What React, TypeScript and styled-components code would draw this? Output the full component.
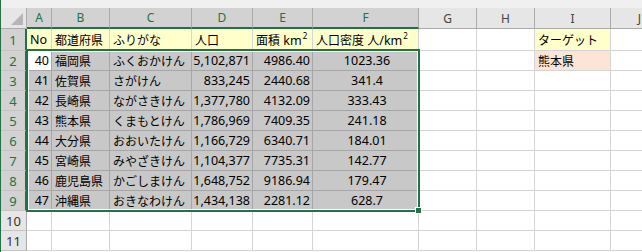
import React from "react";
import styled, { createGlobalStyle, css } from "styled-components";

const GREEN = "#217346";

const Global = createGlobalStyle`
  html, body { margin: 0; padding: 0; background: #fff; }
  body { font-family: "Noto Sans", "Noto Sans CJK JP", sans-serif; color: #000; }
`;

const Window = styled.div`
  width: 642px;
  height: 252px;
  overflow: hidden;
  box-sizing: border-box;
  border-left: 1px solid ${GREEN};
  background: #fff;
`;

const TopStrip = styled.div`
  height: 8px;
  background: #f0f0f0;
`;

const Sheet = styled.div`
  display: grid;
  grid-template-columns: 26px 25px 58px 82px 61px 60px 106px 58px 58px 76px 58px;
  grid-template-rows: 21px 22px repeat(10, 20px);
  font-size: 12.5px;
`;

type Pos = { $r: number; $c: number };

const placed = css<Pos>`
  grid-row: ${(p) => p.$r};
  grid-column: ${(p) => p.$c};
  box-sizing: border-box;
  min-width: 0;
  overflow: hidden;
  white-space: nowrap;
  display: flex;
  align-items: center;
`;

const Corner = styled.div<Pos>`
  ${placed};
  background: #e6e6e6;
  border-right: 1px solid #ababab;
  border-bottom: 1px solid #ababab;
  justify-content: flex-end;
  align-items: flex-end;
  padding: 0 3px 3px 0;
`;

const Triangle = styled.div`
  width: 0;
  height: 0;
  border-left: 12px solid transparent;
  border-bottom: 12px solid #b5b5b5;
`;

const ColHead = styled.div<Pos & { $sel: boolean }>`
  ${placed};
  justify-content: center;
  font-size: 12px;
  background: ${(p) => (p.$sel ? "#d2d2d2" : "#e6e6e6")};
  color: ${(p) => (p.$sel ? GREEN : "#444")};
  border-right: 1px solid #ababab;
  border-bottom: ${(p) => (p.$sel ? `2px solid ${GREEN}` : "1px solid #ababab")};
`;

const RowHead = styled.div<Pos & { $sel: boolean }>`
  ${placed};
  justify-content: center;
  font-size: 13px;
  background: ${(p) => (p.$sel ? "#d2d2d2" : "#e6e6e6")};
  color: ${(p) => (p.$sel ? GREEN : "#333")};
  border-right: ${(p) => (p.$sel ? `2px solid ${GREEN}` : "1px solid #ababab")};
  border-bottom: 1px solid #c4c4c4;
`;

type Fill = "white" | "yellow" | "peach" | "sel";
type Align = "left" | "right" | "center";

const fills: Record<Fill, string> = {
  white: "#ffffff",
  yellow: "#ffffcc",
  peach: "#fce4d6",
  sel: "#c8c8c8",
};

const Cell = styled.div<Pos & { $fill: Fill; $align: Align; $line: "light" | "dark" }>`
  ${placed};
  padding: ${(p) => (p.$align === "right" ? "0 2px 0 0" : "0 0 0 3px")};
  background: ${(p) => fills[p.$fill]};
  border-right: 1px solid ${(p) => (p.$line === "dark" ? "#a6a6a6" : "#d4d4d4")};
  border-bottom: 1px solid ${(p) => (p.$line === "dark" ? "#a6a6a6" : "#d4d4d4")};
  justify-content: ${(p) =>
    p.$align === "left" ? "flex-start" : p.$align === "right" ? "flex-end" : "center"};
`;

const Label = styled.span`
  display: inline-block;
  white-space: nowrap;
`;

const Jp = styled.span`
  font-family: "Noto Sans CJK JP", sans-serif;
  font-size: 12px;
`;

const Sup = styled.sup`
  font-size: 8px;
  vertical-align: 6px;
  line-height: 0;
  margin-left: 1px;
`;

const Selection = styled.div`
  grid-row: 3 / 11;
  grid-column: 2 / 8;
  margin: -2px -1px -1px -1px;
  border: 2px solid ${GREEN};
  box-shadow: inset 0 0 0 1px #fff;
  position: relative;
  z-index: 2;
  pointer-events: none;
`;

const FillHandle = styled.div`
  position: absolute;
  right: -4px;
  bottom: -4px;
  width: 5px;
  height: 5px;
  background: ${GREEN};
  border: 1px solid #fff;
`;

const columns = ["A", "B", "C", "D", "E", "F", "G", "H", "I", "J"];

type Row = [string, string, string, string, string, string];

const data: Row[] = [
  ["40", "福岡県", "ふくおかけん", "5,102,871", "4986.40", "1023.36"],
  ["41", "佐賀県", "さがけん", "833,245", "2440.68", "341.4"],
  ["42", "長崎県", "ながさきけん", "1,377,780", "4132.09", "333.43"],
  ["43", "熊本県", "くまもとけん", "1,786,969", "7409.35", "241.18"],
  ["44", "大分県", "おおいたけん", "1,166,729", "6340.71", "184.01"],
  ["45", "宮崎県", "みやざきけん", "1,104,377", "7735.31", "142.77"],
  ["46", "鹿児島県", "かごしまけん", "1,648,752", "9186.94", "179.47"],
  ["47", "沖縄県", "おきなわけん", "1,434,138", "2281.12", "628.7"],
];

const aligns: Align[] = ["right", "left", "left", "right", "right", "center"];

const header: React.ReactNode[] = [
  "No",
  <Jp>都道府県</Jp>,
  <Jp>ふりがな</Jp>,
  <Jp>人口</Jp>,
  <Label>
    <Jp>面積</Jp> km<Sup>2</Sup>
  </Label>,
  <Label>
    <Jp>人口密度</Jp> <Jp>人</Jp>/km<Sup>2</Sup>
  </Label>,
];

const isJp = (s: string) => /[^\x00-\x7f]/.test(s);

export default function App() {
  const cells: React.ReactNode[] = [];

  cells.push(
    <Corner key="corner" $r={1} $c={1}>
      <Triangle />
    </Corner>
  );
  columns.forEach((col, i) => {
    cells.push(
      <ColHead key={`h${col}`} $r={1} $c={i + 2} $sel={i < 6}>
        {col}
      </ColHead>
    );
  });

  for (let r = 1; r <= 11; r++) {
    const gr = r + 1;
    cells.push(
      <RowHead key={`r${r}`} $r={gr} $c={1} $sel={r <= 9}>
        {r}
      </RowHead>
    );
    for (let c = 0; c < 10; c++) {
      let content: React.ReactNode = null;
      let fill: Fill = "white";
      let align: Align = "left";
      let line: "light" | "dark" = "light";
      if (r === 1 && c < 6) {
        content = header[c];
        fill = "yellow";
      } else if (r >= 2 && r <= 9 && c < 6) {
        const v = data[r - 2][c];
        content = isJp(v) ? <Jp>{v}</Jp> : v;
        align = aligns[c];
        fill = r === 2 && c === 0 ? "white" : "sel";
        line = "dark";
      } else if (c === 8 && r === 1) {
        content = <Jp>ターゲット</Jp>;
        fill = "yellow";
      } else if (c === 8 && r === 2) {
        content = <Jp>熊本県</Jp>;
        fill = "peach";
      }
      cells.push(
        <Cell key={`c${r}-${c}`} $r={gr} $c={c + 2} $fill={fill} $align={align} $line={line}>
          {content}
        </Cell>
      );
    }
  }

  return (
    <>
      <Global />
      <Window>
        <TopStrip />
        <Sheet>
          {cells}
          <Selection>
            <FillHandle />
          </Selection>
        </Sheet>
      </Window>
    </>
  );
}
